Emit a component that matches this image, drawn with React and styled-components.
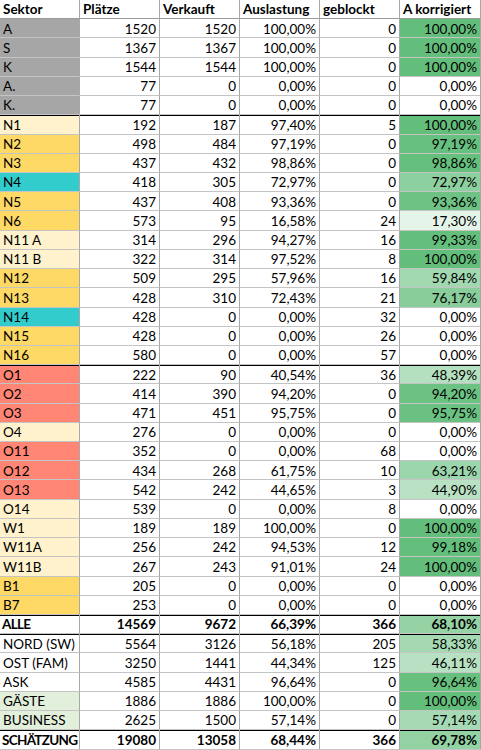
import React from "react";
import styled, { createGlobalStyle, css } from "styled-components";

const Global = createGlobalStyle`
  html, body { margin: 0; padding: 0; background: #fff; }
  body { font-family: Lato, "Open Sans", sans-serif; }
`;

const FILLS = {
  gray: "#a6a6a6",
  ly: "#fff2cc",
  y: "#ffd966",
  c: "#33cccc",
  r: "#ff8575",
  g: "#e2efda",
  w: "#ffffff",
};

const rows = [
  ["A", 1520, 1520, "100,00%", 0, "100,00%", "gray"],
  ["S", 1367, 1367, "100,00%", 0, "100,00%", "gray"],
  ["K", 1544, 1544, "100,00%", 0, "100,00%", "gray"],
  ["A.", 77, 0, "0,00%", 0, "0,00%", "gray"],
  ["K.", 77, 0, "0,00%", 0, "0,00%", "gray"],
  ["N1", 192, 187, "97,40%", 5, "100,00%", "ly", "top"],
  ["N2", 498, 484, "97,19%", 0, "97,19%", "y"],
  ["N3", 437, 432, "98,86%", 0, "98,86%", "y"],
  ["N4", 418, 305, "72,97%", 0, "72,97%", "c"],
  ["N5", 437, 408, "93,36%", 0, "93,36%", "y"],
  ["N6", 573, 95, "16,58%", 24, "17,30%", "y"],
  ["N11 A", 314, 296, "94,27%", 16, "99,33%", "ly"],
  ["N11 B", 322, 314, "97,52%", 8, "100,00%", "ly"],
  ["N12", 509, 295, "57,96%", 16, "59,84%", "y"],
  ["N13", 428, 310, "72,43%", 21, "76,17%", "y"],
  ["N14", 428, 0, "0,00%", 32, "0,00%", "c"],
  ["N15", 428, 0, "0,00%", 26, "0,00%", "y"],
  ["N16", 580, 0, "0,00%", 57, "0,00%", "y"],
  ["O1", 222, 90, "40,54%", 36, "48,39%", "r", "top"],
  ["O2", 414, 390, "94,20%", 0, "94,20%", "r"],
  ["O3", 471, 451, "95,75%", 0, "95,75%", "r"],
  ["O4", 276, 0, "0,00%", 0, "0,00%", "ly"],
  ["O11", 352, 0, "0,00%", 68, "0,00%", "r"],
  ["O12", 434, 268, "61,75%", 10, "63,21%", "r"],
  ["O13", 542, 242, "44,65%", 3, "44,90%", "r"],
  ["O14", 539, 0, "0,00%", 8, "0,00%", "ly"],
  ["W1", 189, 189, "100,00%", 0, "100,00%", "ly"],
  ["W11A", 256, 242, "94,53%", 12, "99,18%", "ly"],
  ["W11B", 267, 243, "91,01%", 24, "100,00%", "ly"],
  ["B1", 205, 0, "0,00%", 0, "0,00%", "y"],
  ["B7", 253, 0, "0,00%", 0, "0,00%", "y"],
  ["ALLE", 14569, 9672, "66,39%", 366, "68,10%", "w", "top", true],
  ["NORD (SW)", 5564, 3126, "56,18%", 205, "58,33%", "w", "top"],
  ["OST (FAM)", 3250, 1441, "44,34%", 125, "46,11%", "w"],
  ["ASK", 4585, 4431, "96,64%", 0, "96,64%", "w"],
  ["GÄSTE", 1886, 1886, "100,00%", 0, "100,00%", "g"],
  ["BUSINESS", 2625, 1500, "57,14%", 0, "57,14%", "g"],
  ["SCHÄTZUNG", 19080, 13058, "68,44%", 366, "69,78%", "w", "top", true],
];

const ROW_H = 750 / 39;

function scale(pct) {
  const t = Math.max(0, Math.min(1, parseFloat(pct.replace(",", ".")) / 100));
  const mix = (b) => Math.round(255 + t * (b - 255));
  return `rgb(${mix(99)}, ${mix(190)}, ${mix(123)})`;
}

const Sheet = styled.div`
  width: 481px;
  display: flex;
  flex-direction: column;
  font-size: 13.5px;
  color: #000;
`;

const Row = styled.div`
  display: grid;
  grid-template-columns: 80px 80px 80px 80px 80px 81px;
  height: ${ROW_H}px;
  font-weight: ${(p) => (p.$bold ? 700 : 400)};
  ${(p) =>
    p.$top &&
    css`
      & > div {
        box-shadow: inset 0 1px 0 #000;
      }
    `}
`;

const Cell = styled.div`
  box-sizing: border-box;
  display: flex;
  align-items: center;
  justify-content: ${(p) => (p.$left ? "flex-start" : "flex-end")};
  padding: 2px 3px 0 3px;
  border-right: 1px solid #a8a8a8;
  border-bottom: 1px solid #c4c4c4;
  background: ${(p) => p.$fill || "#fff"};
  white-space: nowrap;
  overflow: hidden;
  line-height: 1;
`;

const NameCell = styled(Cell)`
  padding-left: ${(p) => (p.$tight ? 2 : 3)}px;
  letter-spacing: ${(p) => (p.$tight ? "-0.7px" : "0")};
`;

const HeadCell = styled(Cell)`
  font-weight: 700;
  justify-content: flex-start;
  border-bottom: 1px solid #9a9a9a;
`;

export default function App() {
  return (
    <>
      <Global />
      <Sheet>
        <Row>
          {["Sektor", "Plätze", "Verkauft", "Auslastung", "geblockt", "A korrigiert"].map((h) => (
            <HeadCell key={h}>{h}</HeadCell>
          ))}
        </Row>
        {rows.map(([name, pl, vk, au, gb, ak, fill, rule, bold]) => (
          <Row key={name} $top={rule === "top"} $bold={bold}>
            <NameCell $left $tight={bold} $fill={FILLS[fill]}>{name}</NameCell>
            <Cell>{pl}</Cell>
            <Cell>{vk}</Cell>
            <Cell>{au}</Cell>
            <Cell>{gb}</Cell>
            <Cell $fill={scale(ak)}>{ak}</Cell>
          </Row>
        ))}
      </Sheet>
    </>
  );
}
